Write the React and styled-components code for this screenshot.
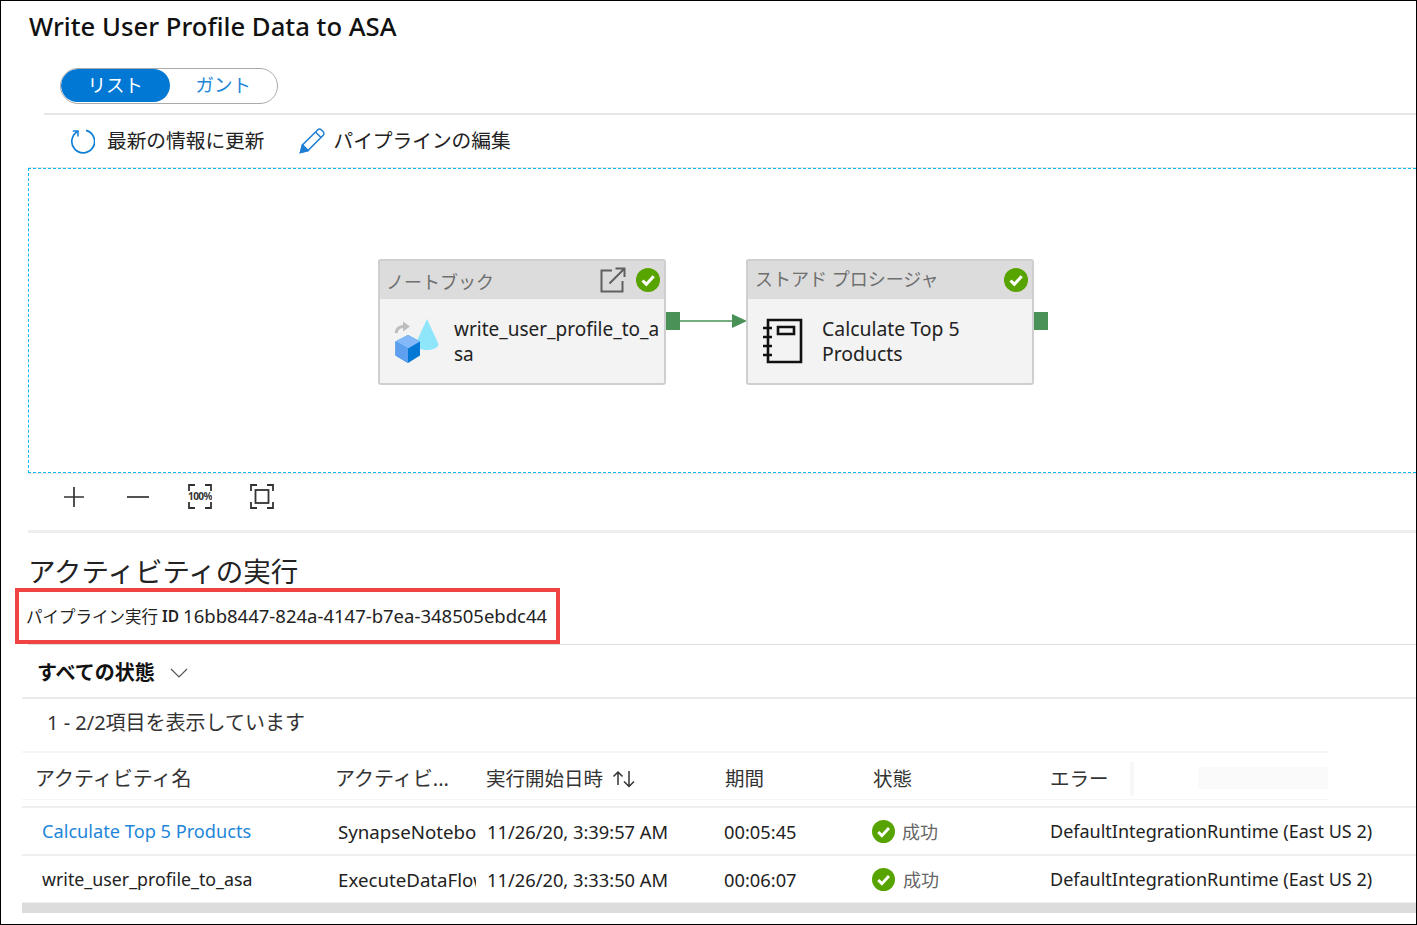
import React from 'react'
import styled, { createGlobalStyle } from 'styled-components'

const FONT = `"Noto Sans", "Noto Sans CJK JP", sans-serif`

const GlobalStyle = createGlobalStyle`
  html, body {
    margin: 0;
    padding: 0;
    background: #fff;
  }
  body {
    font-family: ${FONT};
    color: #1f1f1f;
  }
  * {
    box-sizing: border-box;
  }
`

const Page = styled.div`
  width: 1417px;
  height: 925px;
  border: 1px solid #000;
  overflow: hidden;
  display: flex;
  flex-direction: column;
`

const Title = styled.h1`
  margin: 0;
  height: 67px;
  padding: 8px 0 0 28px;
  font-size: 25.7px;
  line-height: 36px;
  font-weight: 500;
  color: #111;
`

const Toggle = styled.div`
  margin-left: 59px;
  width: 218px;
  height: 36px;
  flex: none;
  display: flex;
  border: 1px solid #aaa;
  border-radius: 18px;
  overflow: hidden;
  padding: 0 0 1px;
`

const ToggleItem = styled.div`
  width: ${(p) => (p.$active ? '109px' : '108px')};
  display: flex;
  align-items: center;
  justify-content: center;
  padding-bottom: 4px;
  font-size: 18.5px;
  border-radius: 17px;
  background: ${(p) => (p.$active ? '#0078d4' : 'transparent')};
  color: ${(p) => (p.$active ? '#fff' : '#1e86d8')};
`

const Toolbar = styled.div`
  margin: 9px 0 0 43px;
  height: 55px;
  flex: none;
  border-top: 2px solid #e6e6e6;
  display: flex;
  align-items: center;
  padding: 0 0 2px 25px;
`

const ToolLabel = styled.span`
  position: relative;
  top: -1px;
`

const ToolButton = styled.div`
  display: flex;
  align-items: center;
  gap: ${(p) => p.$gap}px;
  margin-right: 34px;
  font-size: 19.7px;
  color: #222;
`

const Canvas = styled.div`
  position: relative;
  margin-left: 27px;
  height: 305px;
  flex: none;
  border: 1px dashed #00bcf2;
  border-right: none;
  box-shadow: 0 -1px 0 #e6e6e6, 0 1px 0 #e6e6e6;
`

const Node = styled.div`
  position: absolute;
  left: ${(p) => p.$x}px;
  top: 90px;
  width: 288px;
  height: 126px;
  border: 2px solid #cfcfcf;
  border-radius: 3px;
  background: #f3f3f3;
`

const NodeHead = styled.div`
  height: 38px;
  background: #dcdcdc;
  display: flex;
  align-items: center;
  padding: 0 4px 0 ${(p) => p.$left}px;
  font-size: 18px;
  color: #6f6f6f;
`

const NodeType = styled.span`
  flex: 1;
  white-space: nowrap;
  position: relative;
  top: ${(p) => p.$top}px;
`

const HeadIcons = styled.div`
  display: flex;
  align-items: center;
  gap: 10px;
`

const NodeBody = styled.div`
  display: flex;
  align-items: center;
  height: 84px;
  padding-left: ${(p) => p.$pad}px;
  gap: ${(p) => p.$gap}px;
`

const NodeName = styled.div`
  width: 208px;
  margin-top: ${(p) => p.$top}px;
  font-size: ${(p) => p.$size}px;
  line-height: 25px;
  color: #222;
  overflow-wrap: anywhere;
`

const Port = styled.div`
  position: absolute;
  left: ${(p) => p.$x}px;
  top: 143px;
  width: 14px;
  height: 18px;
  background: #4a9157;
`

const Arrow = styled.svg`
  position: absolute;
  left: 651px;
  top: 143px;
`

const ZoomBar = styled.div`
  height: 57px;
  flex: none;
  display: flex;
  align-items: center;
  padding: 0 0 10px 61px;
  gap: 38px;

  & > :first-child {
    margin-right: 2px;
  }
`

const SectionRule = styled.div`
  margin-left: ${(p) => p.$left}px;
  height: ${(p) => p.$h}px;
  flex: none;
  background: ${(p) => p.$color};
`

const Heading = styled.h2`
  margin: 0;
  height: 55px;
  flex: none;
  padding: 19px 0 0 27px;
  font-size: 27.5px;
  line-height: 40px;
  font-weight: 400;
  color: #222;
`

const RunIdBox = styled.div`
  margin-left: 14px;
  width: 545px;
  height: 56px;
  flex: none;
  border: 4px solid #f04444;
  display: flex;
  align-items: center;
  padding: 0 0 0 7px;
  white-space: nowrap;
`

const RunLabel = styled.span`
  font-size: 16.5px;
  margin-right: 4px;
  color: #222;
`

const RunLabelBold = styled.span`
  font-size: 15.5px;
  font-weight: 600;
  margin-right: 4px;
`

const RunValue = styled.span`
  position: relative;
  top: -1px;
  font-size: 18.5px;
  color: #222;
`

const FilterRow = styled.div`
  height: 52px;
  flex: none;
  display: flex;
  align-items: center;
  gap: 15px;
  padding-left: 36px;
  font-size: 20px;
  font-weight: 700;
  color: #111;
`

const Chevron = styled.svg`
  margin-top: 3px;
`

const CountRow = styled.div`
  margin-left: 21px;
  height: 54px;
  flex: none;
  border-top: 2px solid #eaeaea;
  padding: 11px 0 0 25px;
  font-size: 20px;
  line-height: 26px;
  color: #333;
`

const Row = styled.div`
  margin-left: 21px;
  flex: none;
  display: grid;
  grid-template-columns: 308px 150px 238px 148px 178px 1fr;
  align-items: center;
  height: 48px;
  border-bottom: 2px solid #efefef;
`

const HeaderRow = styled(Row)`
  position: relative;
  width: 1306px;
  height: 49px;
  padding-top: 2px;
  border-top: 2px solid #f6f6f6;
  border-bottom: 1px solid #f6f6f6;
`

const Cell = styled.div`
  padding-left: ${(p) => p.$pad}px;
  margin-right: ${(p) => p.$clip || 0}px;
  overflow: hidden;
  white-space: nowrap;
  font-size: ${(p) => p.$size}px;
  color: ${(p) => (p.$link ? '#1e86d8' : p.$head ? '#333' : '#222')};
`

const StatusCell = styled.div`
  display: flex;
  align-items: center;
  gap: ${(p) => p.$gap}px;
  padding-left: 6px;
  font-size: 18px;
  color: #666;
`

const HeadSort = styled.span`
  display: inline-flex;
  align-items: center;
  gap: 9px;
`

const ColumnGrip = styled.div`
  position: absolute;
  left: 1108px;
  top: 9px;
  width: 4px;
  height: 34px;
  background: #f7f7f7;
`

const HeadPlaceholder = styled.div`
  position: absolute;
  left: 1176px;
  top: 14px;
  width: 130px;
  height: 22px;
  background: #fafafa;
`

const HeadGap = styled.div`
  margin-left: 21px;
  height: 8px;
  flex: none;
  border-bottom: 2px solid #eee;
`

const ScrollBar = styled.div`
  margin: -1px 0 0 21px;
  height: 10px;
  flex: none;
  background: #dcdcdc;
`

const CheckBadge = ({ size }) => (
  <svg width={size} height={size} viewBox="0 0 24 24" style={{ flex: 'none' }}>
    <circle cx="12" cy="12" r="12" fill="#57a300" />
    <path d="M6.5 12.5l3.8 3.8 7.4-8" fill="none" stroke="#fff" strokeWidth="3" />
  </svg>
)

const RefreshIcon = () => (
  <svg width="26" height="26" viewBox="0 0 26 26" fill="none" stroke="#0f7fd6" strokeWidth="1.7">
    <path d="M9.2 3.2A11.4 11.4 0 1 0 17 2.4" />
    <path d="M9 8.5V3H3.8" strokeWidth="1.5" />
  </svg>
)

const PencilIcon = () => (
  <svg width="26" height="26" viewBox="0 0 26 26" fill="none" stroke="#1e7fd4" strokeWidth="1.5">
    <path d="M1.5 24.5l2-7.5L18.8 1.8a2.4 2.4 0 0 1 3.4 0l2 2a2.4 2.4 0 0 1 0 3.4L9 22.5z" />
    <path d="M3.5 17l5.5 5.5M16.5 4l5.5 5.5" />
    <path d="M1.5 24.5l2-7.5 5.5 5.5z" fill="#1e7fd4" />
  </svg>
)

const OpenIcon = () => (
  <svg width="26" height="26" viewBox="0 0 26 26" fill="none" stroke="#5f5f5f" strokeWidth="2">
    <path d="M12 3.5H1.5v21h21V14" />
    <path d="M9.5 16.5L24 2M15.5 1.5H24.500V10" />
  </svg>
)

const DataflowIcon = () => (
  <svg width="46" height="46" viewBox="0 0 46 46">
    <path d="M2 15c.5-4 3.500-6.500 8-6.500" fill="none" stroke="#bdbdbd" strokeWidth="3" />
    <path d="M9 3.500l7 5-7 5z" fill="#bdbdbd" />
    <path d="M33 1L21.500 26c0 3.500 5 6 11.500 6s11.500-2.500 11.500-6z" fill="#8fe6fb" />
    <path d="M14 17l12 6.500v14L14 45 1.500 37.500v-14z" fill="#0078d4" />
    <path d="M14 17l12 6.500-12 7-12.500-7z" fill="#83b9f9" />
    <path d="M1.500 23.500l12.500 7V45L1.500 37.500z" fill="#5ea0ef" />
  </svg>
)

const NotebookIcon = () => (
  <svg width="40" height="46" viewBox="0 0 40 46" fill="none" stroke="#111" strokeWidth="2.6">
    <path d="M5 2h33v42H5z" />
    <path d="M15 9h16v7H15z" />
    <path d="M0 10h9M0 19h9M0 28h9M0 37h9" strokeWidth="2.6" />
  </svg>
)

const PlusIcon = () => (
  <svg width="24" height="24" viewBox="0 0 24 24" stroke="#333" strokeWidth="1.7">
    <path d="M12 2v20M2 12h20" />
  </svg>
)

const MinusIcon = () => (
  <svg width="24" height="24" viewBox="0 0 24 24" stroke="#333" strokeWidth="1.7">
    <path d="M1 12h22" />
  </svg>
)

const Corners = () => (
  <path d="M1 7V1h6M17 1h6v6M23 18v6h-6M7 24H1v-6" fill="none" stroke="#333" strokeWidth="1.800" />
)

const ActualSizeIcon = () => (
  <svg width="24" height="25" viewBox="0 0 24 25">
    <Corners />
    <text x="12" y="16" fontSize="10" fontWeight="700" textAnchor="middle" fill="#333" fontFamily="Noto Sans, sans-serif" letterSpacing="-.5">
      100%
    </text>
  </svg>
)

const FitIcon = () => (
  <svg width="24" height="25" viewBox="0 0 24 25">
    <Corners />
    <rect x="5.500" y="6" width="13" height="13" fill="none" stroke="#333" strokeWidth="1.800" />
  </svg>
)

const ChevronIcon = () => (
  <Chevron width="18" height="10" viewBox="0 0 18 10" fill="none" stroke="#555" strokeWidth="1.200">
    <path d="M1 1l8 8 8-8" />
  </Chevron>
)

const SortIcon = () => (
  <svg width="24" height="18" viewBox="0 0 24 18" fill="none" stroke="#333" strokeWidth="1.500" style={{ marginTop: 3 }}>
    <path d="M6 15V2M1.500 6.500L6 2l4.500 4.500" />
    <path d="M17 1v15M12 11.500l5 5 5-5" />
  </svg>
)

const runs = [
  {
    name: 'Calculate Top 5 Products',
    nameSize: 18.2,
    link: true,
    type: 'SynapseNotebook',
    start: '11/26/20, 3:39:57 AM',
    duration: '00:05:45',
    gap: 7,
  },
  {
    name: 'write_user_profile_to_asa',
    nameSize: 17.8,
    type: 'ExecuteDataFlow',
    start: '11/26/20, 3:33:50 AM',
    duration: '00:06:07',
    gap: 8,
  },
]

export default function App() {
  return (
    <>
      <GlobalStyle />
      <Page>
        <Title>Write User Profile Data to ASA</Title>

        <Toggle>
          <ToggleItem $active>リスト</ToggleItem>
          <ToggleItem>ガント</ToggleItem>
        </Toggle>

        <Toolbar>
          <ToolButton $gap={12}>
            <RefreshIcon />
            <ToolLabel>最新の情報に更新</ToolLabel>
          </ToolButton>
          <ToolButton $gap={9}>
            <PencilIcon />
            <ToolLabel>パイプラインの編集</ToolLabel>
          </ToolButton>
        </Toolbar>

        <Canvas>
          <Node $x={349}>
            <NodeHead $left={6}>
              <NodeType $top={1}>ノートブック</NodeType>
              <HeadIcons>
                <OpenIcon />
                <CheckBadge size={24} />
              </HeadIcons>
            </NodeHead>
            <NodeBody $pad={14} $gap={14}>
              <DataflowIcon />
              <NodeName $size={19} $top={2}>write_user_profile_to_asa</NodeName>
            </NodeBody>
          </Node>
          <Port $x={637} />
          <Arrow width="67" height="18" viewBox="0 0 67 18">
            <path d="M0 9h54" stroke="#4a9157" strokeWidth="1.500" />
            <path d="M52 2l15 7-15 7z" fill="#4a9157" />
          </Arrow>
          <Node $x={717}>
            <NodeHead $left={7}>
              <NodeType $top={-2}>ストアド プロシージャ</NodeType>
              <CheckBadge size={24} />
            </NodeHead>
            <NodeBody $pad={15} $gap={19}>
              <NotebookIcon />
              <NodeName $size={19.4} $top={0}>Calculate Top 5 Products</NodeName>
            </NodeBody>
          </Node>
          <Port $x={1005} />
        </Canvas>

        <ZoomBar>
          <PlusIcon />
          <MinusIcon />
          <ActualSizeIcon />
          <FitIcon />
        </ZoomBar>
        <SectionRule $left={27} $h={3} $color="#eee" />

        <Heading>アクティビティの実行</Heading>

        <RunIdBox>
          <RunLabel>パイプライン実行</RunLabel>
          <RunLabelBold>ID</RunLabelBold>
          <RunValue>16bb8447-824a-4147-b7ea-348505ebdc44</RunValue>
        </RunIdBox>
        <SectionRule $left={27} $h={1} $color="#ddd" />

        <FilterRow>
          すべての状態
          <ChevronIcon />
        </FilterRow>

        <CountRow>1 - 2/2項目を表示しています</CountRow>

        <HeaderRow>
          <Cell $head $size={20} $pad={13}>アクティビティ名</Cell>
          <Cell $head $size={20} $pad={5}>アクティビ...</Cell>
          <Cell $head $size={19.5} $pad={6}>
            <HeadSort>
              実行開始日時
              <SortIcon />
            </HeadSort>
          </Cell>
          <Cell $head $size={19.5} $pad={7}>期間</Cell>
          <Cell $head $size={19.5} $pad={7}>状態</Cell>
          <Cell $head $size={19.5} $pad={6}>エラー</Cell>
          <ColumnGrip />
          <HeadPlaceholder />
        </HeaderRow>
        <HeadGap />

        {runs.map((run) => (
          <Row key={run.name}>
            <Cell $pad={20} $size={run.nameSize} $link={run.link}>{run.name}</Cell>
            <Cell $pad={8} $size={18.7} $clip={4}>{run.type}</Cell>
            <Cell $pad={7} $size={18.3}>{run.start}</Cell>
            <Cell $pad={6} $size={18.3}>{run.duration}</Cell>
            <StatusCell $gap={run.gap}>
              <CheckBadge size={23} />
              成功
            </StatusCell>
            <Cell $pad={6} $size={18}>DefaultIntegrationRuntime (East US 2)</Cell>
          </Row>
        ))}
        <ScrollBar />
      </Page>
    </>
  )
}
